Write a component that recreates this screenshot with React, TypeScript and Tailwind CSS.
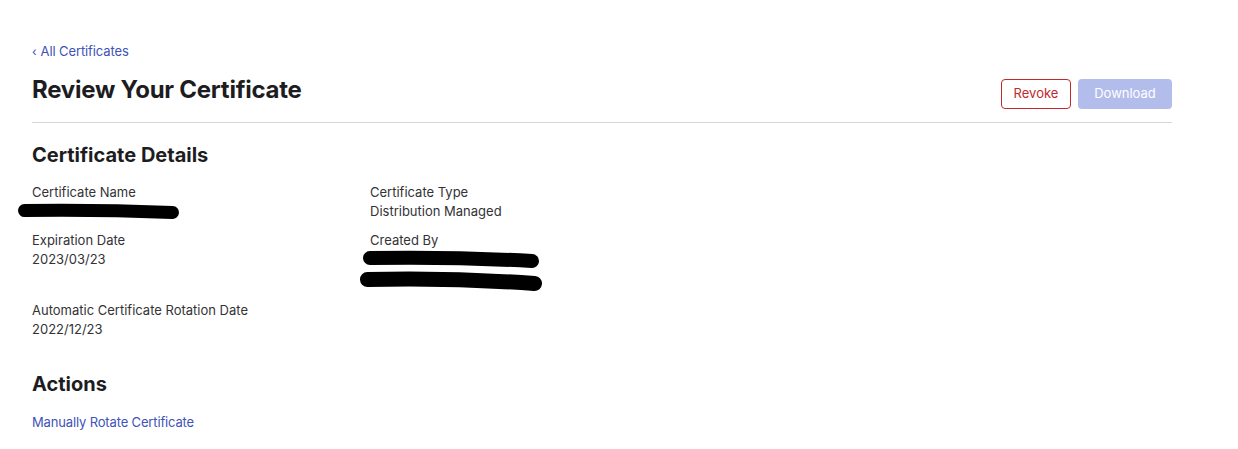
import React from 'react';

const FONT = { fontFamily: 'Inter, "Noto Sans", "Liberation Sans", sans-serif' };

const Redaction: React.FC<{ width: number; left: number; tilt?: number; thickness?: number }> = ({
  width,
  left,
  tilt = 2,
  thickness = 13,
}) => (
  <div className="relative h-[19px]">
    <svg
      className="absolute top-0 overflow-visible"
      style={{ left }}
      width={width}
      height={19}
      viewBox={`0 0 ${width} 19`}
    >
      <path
        d={`M ${thickness / 2} ${9.5 - tilt / 2} Q ${width / 2} ${9.5 - tilt} ${width - thickness / 2} ${9.5 + tilt / 2}`}
        stroke="#000"
        strokeWidth={thickness}
        strokeLinecap="round"
        fill="none"
      />
    </svg>
  </div>
);

const Field: React.FC<{ label: string; children: React.ReactNode }> = ({ label, children }) => (
  <div className="text-[13px] leading-[19px] text-[#333336]">
    <div>{label}</div>
    {children}
  </div>
);

const App: React.FC = () => {
  return (
    <div className="min-h-[449px] bg-white" style={FONT}>
      <div className="w-[1140px] ml-[32px] pt-[42px]">
        <a href="#" className="text-[13px] leading-[19px] text-[#4053b8] flex items-center gap-[4px] tracking-[-0.1px]">
          <span className="text-[12px]">‹</span>
          <span>All Certificates</span>
        </a>

        <div className="flex justify-between border-b border-[#d6d6d6] pb-[13px] mt-[14px]">
          <h1 className="text-[24px] leading-[29px] font-bold text-[#1d1d1f] tracking-[-0.25px]">
            Review Your Certificate
          </h1>
          <div className="flex gap-[7px] mt-[4px]">
            <button className="h-[30px] w-[70px] rounded-[4px] border border-[#c2282e] text-[13px] text-[#c2282e] bg-white">
              Revoke
            </button>
            <button className="h-[30px] w-[94px] rounded-[4px] bg-[#b3bdec] text-[13px] text-white">
              Download
            </button>
          </div>
        </div>

        <h2 className="mt-[20px] text-[20px] leading-[24px] font-bold text-[#1d1d1f]">Certificate Details</h2>

        <div className="mt-[16px] grid grid-cols-[338px_1fr] gap-y-[10px]">
          <Field label="Certificate Name">
            <Redaction width={161} left={-14} tilt={2} />
          </Field>
          <Field label="Certificate Type">
            <div>Distribution Managed</div>
          </Field>
          <Field label="Expiration Date">
            <div>2023/03/23</div>
          </Field>
          <Field label="Created By">
            <Redaction width={176} left={-7} tilt={3} thickness={14} />
            <div className="mt-[3px]">
              <Redaction width={182} left={-10} tilt={4} thickness={15} />
            </div>
          </Field>
          <Field label="Automatic Certificate Rotation Date">
            <div>2022/12/23</div>
          </Field>
          <div />
        </div>

        <h2 className="mt-[33px] text-[20px] leading-[24px] font-bold text-[#1d1d1f]">Actions</h2>
        <a href="#" className="block mt-[17px] text-[13px] leading-[19px] text-[#4053b8] tracking-[-0.15px]">
          Manually Rotate Certificate
        </a>
      </div>
    </div>
  );
};

export default App;
